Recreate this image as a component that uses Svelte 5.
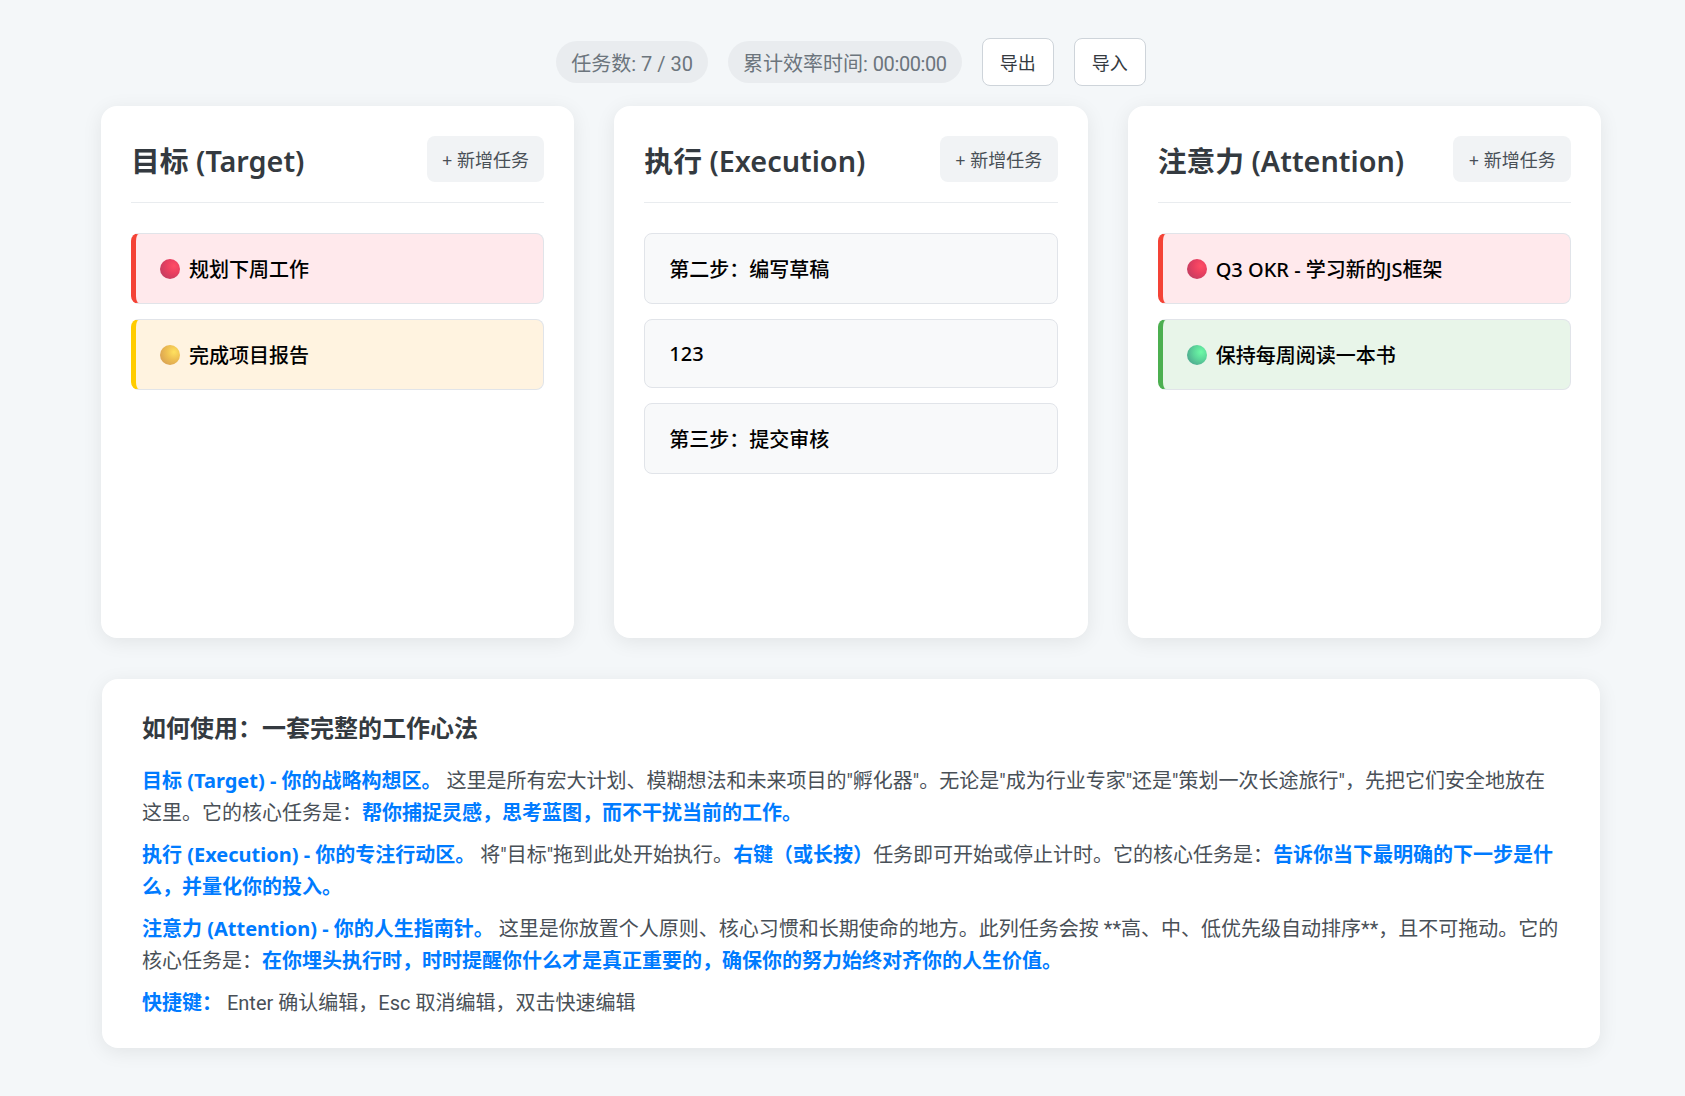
<script>
  const columns = [
    {
      title: '目标 (Target)',
      tasks: [
        { text: '规划下周工作', level: 'high' },
        { text: '完成项目报告', level: 'mid' }
      ]
    },
    {
      title: '执行 (Execution)',
      tasks: [
        { text: '第二步：编写草稿' },
        { text: '123' },
        { text: '第三步：提交审核' }
      ]
    },
    {
      title: '注意力 (Attention)',
      tasks: [
        { text: 'Q3 OKR - 学习新的JS框架', level: 'high' },
        { text: '保持每周阅读一本书', level: 'low' }
      ]
    }
  ];
</script>

<div class="page">
  <header class="toolbar">
    <span class="stat">任务数: 7 / 30</span>
    <span class="stat">累计效率时间: <span class="time">00:00:00</span></span>
    <button class="tool-btn" type="button">导出</button>
    <button class="tool-btn" type="button">导入</button>
  </header>

  <main class="board">
    {#each columns as col}
      <section class="column">
        <div class="column-head">
          <h2>{col.title}</h2>
          <button class="add-btn" type="button">+ 新增任务</button>
        </div>
        <div class="task-list">
          {#each col.tasks as task}
            <div class="task {task.level || ''}">
              {#if task.level}<span class="dot"></span>{/if}
              <span>{task.text}</span>
            </div>
          {/each}
        </div>
      </section>
    {/each}
  </main>

  <section class="help">
    <h3>如何使用：一套完整的工作心法</h3>
    <p><strong>目标 (Target) - 你的战略构想区。</strong> 这里是所有宏大计划、模糊想法和未来项目的"孵化器"。无论是"成为行业专家"还是"策划一次长途旅行"，先把它们安全地放在这里。它的核心任务是：<strong>帮你捕捉灵感，思考蓝图，而不干扰当前的工作。</strong></p>
    <p><strong>执行 (Execution) - 你的专注行动区。</strong> 将"目标"拖到此处开始执行。<strong>右键（或长按）</strong>任务即可开始或停止计时。它的核心任务是：<strong>告诉你当下最明确的下一步是什么，并量化你的投入。</strong></p>
    <p><strong>注意力 (Attention) - 你的人生指南针。</strong> 这里是你放置个人原则、核心习惯和长期使命的地方。此列任务会按 **高、中、低优先级自动排序**，且不可拖动。它的核心任务是：<strong>在你埋头执行时，时时提醒你什么才是真正重要的，确保你的努力始终对齐你的人生价值。</strong></p>
    <p><strong>快捷键：</strong> Enter 确认编辑，Esc 取消编辑，双击快速编辑</p>
  </section>
</div>

<style>
  :global(body) {
    background: #f4f7f9;
    font-family: "Noto Sans", "Noto Sans CJK SC", sans-serif;
  }

  .page {
    width: 1500px;
    padding: 38px 0 48px;
    margin-left: 101px;
  }

  .toolbar {
    display: flex;
    justify-content: center;
    align-items: center;
    gap: 20px;
    margin-bottom: 20px;
  }

  .stat {
    padding: 0 15px;
    height: 42px;
    line-height: 46px;
    border-radius: 21px;
    background: #e9ecef;
    color: #6c757d;
    font-family: "Roboto", "Noto Sans CJK SC", sans-serif;
    font-size: 20px;
  }

  .time {
    letter-spacing: -0.4px;
  }

  .tool-btn {
    width: 72px;
    height: 48px;
    padding: 0;
    background: #fff;
    border: 1px solid #ced4da;
    border-radius: 8px;
    color: #343a40;
    font: inherit;
    font-size: 18px;
  }

  .board {
    display: grid;
    grid-template-columns: repeat(3, 1fr);
    gap: 40px;
  }

  .column {
    height: 532px;
    box-sizing: border-box;
    padding: 30px;
    background: #fff;
    border-radius: 16px;
    box-shadow: 0 4px 20px rgba(0, 0, 0, 0.08);
  }

  .column-head {
    display: flex;
    justify-content: space-between;
    align-items: center;
    padding-bottom: 20px;
    margin-bottom: 30.4px;
    border-bottom: 1px solid #e9ecef;
  }

  h2 {
    margin: 0;
    color: #343a40;
    font-size: 28.8px;
    font-weight: 600;
  }

  .add-btn {
    width: 117.6px;
    height: 46px;
    padding: 0;
    background: #f1f3f5;
    border: none;
    border-radius: 8px;
    color: #495057;
    font: inherit;
    font-size: 18px;
  }

  .task-list {
    display: flex;
    flex-direction: column;
    gap: 15.6px;
  }

  .task {
    display: flex;
    align-items: center;
    gap: 9px;
    padding: 19.7px 24px;
    background: #f8f9fa;
    border: 1px solid #e1e4e9;
    border-radius: 8px;
    color: #000;
    font-size: 20px;
    font-weight: 500;
  }

  .task.high {
    background: #ffe9ec;
    border-left: 5px solid #f44336;
  }

  .task.mid {
    background: #fff3e0;
    border-left: 5px solid #ffcc00;
  }

  .task.low {
    background: #e8f5e9;
    border-left: 5px solid #4caf50;
  }

  .dot {
    flex: none;
    width: 20px;
    height: 20px;
    border-radius: 50%;
  }

  .high .dot {
    background: radial-gradient(circle at 70% 35%, #ff4d65 0%, #e83f60 40%, #b03d62 100%);
  }

  .mid .dot {
    background: radial-gradient(circle at 70% 35%, #ffe15f 0%, #eebf52 40%, #cf9455 100%);
  }

  .low .dot {
    background: radial-gradient(circle at 70% 35%, #6dfaa6 0%, #5cd69a 40%, #46928a 100%);
  }

  .help {
    margin: 41px 1px 0;
    padding: 30px 38px 29px 40px;
    background: #fff;
    border-radius: 16px;
    box-shadow: 0 4px 20px rgba(0, 0, 0, 0.08);
  }

  h3 {
    margin: 0 0 21px;
    color: #343a40;
    font-size: 24px;
    font-weight: 600;
  }

  p {
    margin: 0 0 10px;
    color: #495057;
    font-family: "Roboto", "Noto Sans CJK SC", sans-serif;
    font-size: 20px;
    line-height: 32px;
  }

  p:last-child {
    margin-bottom: 0;
  }

  strong {
    color: #007bff;
    font-family: "Noto Sans", "Noto Sans CJK SC", sans-serif;
    font-weight: 700;
  }
</style>
